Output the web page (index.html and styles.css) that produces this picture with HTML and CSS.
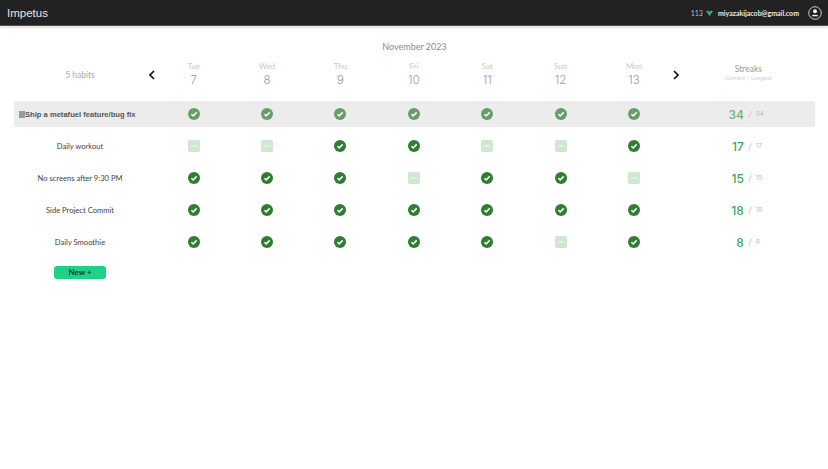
FILE: index.html
```html
<!doctype html>
<html>
<head>
   <title>Impetus</title>
   <meta charset="utf-8">
   <link rel="stylesheet" href="styles.css">
</head>
<body>
   <svg class="defs" width="0" height="0">
      <symbol id="done" viewBox="0 0 12 12">
         <circle cx="6" cy="6" r="6" fill="#2e7d32"/>
         <path d="M3.4 6.2 L5.2 7.9 L8.7 4.4" fill="none" stroke="#fff" stroke-width="1.5"/>
      </symbol>
      <symbol id="skip" viewBox="0 0 12 12">
         <rect width="12" height="12" rx="2" fill="#cde8cf"/>
         <path d="M2.5 6 H9.5" stroke="#e6f4e7" stroke-width="1.6"/>
      </symbol>
   </svg>

   <header class="topbar">
      <div class="brand">Impetus</div>
      <div class="account">
         <span class="points">113</span>
         <svg class="gem" width="7" height="6" viewBox="0 0 8 7"><path d="M0 1.5 L2 0.5 L4 2 L6 0.5 L8 1.5 L4 7 Z" fill="#26b47f"/></svg>
         <span class="email">miyazakijacob@gmail.com</span>
         <span class="avatar">
            <svg width="14" height="14" viewBox="0 0 14 14"><circle cx="7" cy="7" r="6.3" fill="none" stroke="#ddd" stroke-width="0.9"/><circle cx="7" cy="5.2" r="1.9" fill="#fff"/><path d="M3.8 10.2 C3.8 8.2 10.2 8.2 10.2 10.2 Z" fill="#fff"/></svg>
         </span>
      </div>
   </header>

   <main class="tracker">
      <div class="month">November 2023</div>

      <div class="grid head">
         <div class="count">5 habits</div>
         <div class="nav"><svg width="8" height="10" viewBox="0 0 8 10"><path d="M6 1 L2 5 L6 9" fill="none" stroke="#111" stroke-width="1.7"/></svg></div>
         <div class="day"><small>Tue</small><b>7</b></div>
         <div class="day"><small>Wed</small><b>8</b></div>
         <div class="day"><small>Thu</small><b>9</b></div>
         <div class="day"><small>Fri</small><b>10</b></div>
         <div class="day"><small>Sat</small><b>11</b></div>
         <div class="day"><small>Sun</small><b>12</b></div>
         <div class="day"><small>Mon</small><b>13</b></div>
         <div class="nav"><svg width="8" height="10" viewBox="0 0 8 10"><path d="M2 1 L6 5 L2 9" fill="none" stroke="#111" stroke-width="1.7"/></svg></div>
         <div class="streak-head">Streaks<small>Current / Longest</small></div>
      </div>

      <div class="grid row active">
         <div class="name"><span class="note"></span>Ship a metafuel feature/bug fix</div>
         <span></span>
         <div class="cell"><svg class="mark"><use href="#done"/></svg></div>
         <div class="cell"><svg class="mark"><use href="#done"/></svg></div>
         <div class="cell"><svg class="mark"><use href="#done"/></svg></div>
         <div class="cell"><svg class="mark"><use href="#done"/></svg></div>
         <div class="cell"><svg class="mark"><use href="#done"/></svg></div>
         <div class="cell"><svg class="mark"><use href="#done"/></svg></div>
         <div class="cell"><svg class="mark"><use href="#done"/></svg></div>
         <span></span>
         <div class="streak"><b>34</b><i>/</i><small>34</small></div>
      </div>

      <div class="grid row">
         <div class="name">Daily workout</div>
         <span></span>
         <div class="cell"><svg class="mark"><use href="#skip"/></svg></div>
         <div class="cell"><svg class="mark"><use href="#skip"/></svg></div>
         <div class="cell"><svg class="mark"><use href="#done"/></svg></div>
         <div class="cell"><svg class="mark"><use href="#done"/></svg></div>
         <div class="cell"><svg class="mark"><use href="#skip"/></svg></div>
         <div class="cell"><svg class="mark"><use href="#skip"/></svg></div>
         <div class="cell"><svg class="mark"><use href="#done"/></svg></div>
         <span></span>
         <div class="streak"><b>17</b><i>/</i><small>17</small></div>
      </div>

      <div class="grid row">
         <div class="name">No screens after 9:30 PM</div>
         <span></span>
         <div class="cell"><svg class="mark"><use href="#done"/></svg></div>
         <div class="cell"><svg class="mark"><use href="#done"/></svg></div>
         <div class="cell"><svg class="mark"><use href="#done"/></svg></div>
         <div class="cell"><svg class="mark"><use href="#skip"/></svg></div>
         <div class="cell"><svg class="mark"><use href="#done"/></svg></div>
         <div class="cell"><svg class="mark"><use href="#done"/></svg></div>
         <div class="cell"><svg class="mark"><use href="#skip"/></svg></div>
         <span></span>
         <div class="streak"><b>15</b><i>/</i><small>15</small></div>
      </div>

      <div class="grid row">
         <div class="name">Side Project Commit</div>
         <span></span>
         <div class="cell"><svg class="mark"><use href="#done"/></svg></div>
         <div class="cell"><svg class="mark"><use href="#done"/></svg></div>
         <div class="cell"><svg class="mark"><use href="#done"/></svg></div>
         <div class="cell"><svg class="mark"><use href="#done"/></svg></div>
         <div class="cell"><svg class="mark"><use href="#done"/></svg></div>
         <div class="cell"><svg class="mark"><use href="#done"/></svg></div>
         <div class="cell"><svg class="mark"><use href="#done"/></svg></div>
         <span></span>
         <div class="streak"><b>18</b><i>/</i><small>18</small></div>
      </div>

      <div class="grid row">
         <div class="name">Daily Smoothie</div>
         <span></span>
         <div class="cell"><svg class="mark"><use href="#done"/></svg></div>
         <div class="cell"><svg class="mark"><use href="#done"/></svg></div>
         <div class="cell"><svg class="mark"><use href="#done"/></svg></div>
         <div class="cell"><svg class="mark"><use href="#done"/></svg></div>
         <div class="cell"><svg class="mark"><use href="#done"/></svg></div>
         <div class="cell"><svg class="mark"><use href="#skip"/></svg></div>
         <div class="cell"><svg class="mark"><use href="#done"/></svg></div>
         <span></span>
         <div class="streak"><b>8</b><i>/</i><small>8</small></div>
      </div>

      <div class="new-wrap"><button class="new">New +</button></div>
   </main>
</body>
</html>
```

FILE: styles.css
```css
body{
   margin: 0;
   font-family: Lato, "Open Sans", sans-serif;
   background: #fff;
   color: #333;
}

.defs{
   position: absolute;
}

.topbar{
   height: 25px;
   background: #222;
   border-bottom: 1px solid #555;
   box-shadow: 0 2px 2px #e4e4e4;
   display: flex;
   align-items: center;
   justify-content: space-between;
   padding: 0 6px 0 7px;
   color: #fff;
}

.brand{
   font-family: "Liberation Sans", sans-serif;
   font-size: 11.5px;
   color: #e4e4e4;
}

.account{
   display: flex;
   align-items: center;
   font-size: 7px;
}

.points{
   color: #bbb;
   margin-right: 3px;
}

.gem{
   margin-right: 5px;
}

.email{
   font-weight: 700;
   color: #e8e8e8;
   margin-right: 9px;
}

.avatar{
   display: flex;
}

.tracker{
   padding: 14px 13px 0 14px;
}

.month{
   text-align: center;
   font-size: 9px;
   line-height: 13px;
   color: #8a8a8a;
   margin-bottom: 4px;
}

.grid{
   display: grid;
   grid-template-columns: 132px 11px repeat(7, 73.4px) 11px 1fr;
   align-items: center;
}

.head{
   height: 36px;
   margin-bottom: 8px;
}

.count{
   text-align: center;
   font-size: 8.5px;
   color: #aaa;
}

.nav{
   display: flex;
   justify-content: center;
}

.day{
   text-align: center;
   color: #999;
}

.day small{
   display: block;
   font-size: 8px;
   line-height: 10px;
   color: #c8c8c8;
}

.day b{
   display: block;
   font-family: Inter, sans-serif;
   font-weight: 300;
   font-size: 11.5px;
   line-height: 18px;
}

.streak-head{
   text-align: center;
   font-size: 8.5px;
   color: #999;
   padding-bottom: 5px;
}

.streak-head small{
   display: block;
   font-size: 6px;
   line-height: 7px;
   color: #d0d0d0;
}

.row{
   height: 32px;
}

.row.active{
   height: 26px;
   margin-bottom: 3px;
   background: #ececec;
   border-radius: 2px;
}

.row.active .mark{
   opacity: .7;
}

.active .name{
   font-family: "Liberation Sans", sans-serif;
   font-weight: 700;
   font-size: 7.6px;
   color: #555;
   text-align: left;
   padding-left: 5px;
   white-space: nowrap;
}

.active .streak b{
   opacity: .75;
}

.note{
   display: inline-block;
   width: 6px;
   height: 7px;
   background: #999;
   vertical-align: -1px;
}

.name{
   text-align: center;
   font-size: 7.6px;
   color: #444;
}

.cell{
   display: flex;
   justify-content: center;
}

.mark{
   width: 12px;
   height: 12px;
}

.streak{
   display: grid;
   grid-template-columns: 1fr 12px 1fr;
   align-items: center;
   padding-left: 3px;
   color: #bbb;
   font-family: Inter, sans-serif;
}

.streak b{
   text-align: right;
   font-size: 12px;
   font-weight: 500;
   color: #35a853;
}

.streak i{
   text-align: center;
   font-size: 8px;
}

.streak small{
   font-size: 6.5px;
}

.new-wrap{
   width: 132px;
   text-align: center;
   margin-top: 1px;
}

.new{
   width: 52px;
   height: 13px;
   border: 0;
   border-radius: 3px;
   padding: 0;
   background: #1fd186;
   color: #14342a;
   font-family: inherit;
   font-size: 8px;
   font-weight: 700;
}
```
